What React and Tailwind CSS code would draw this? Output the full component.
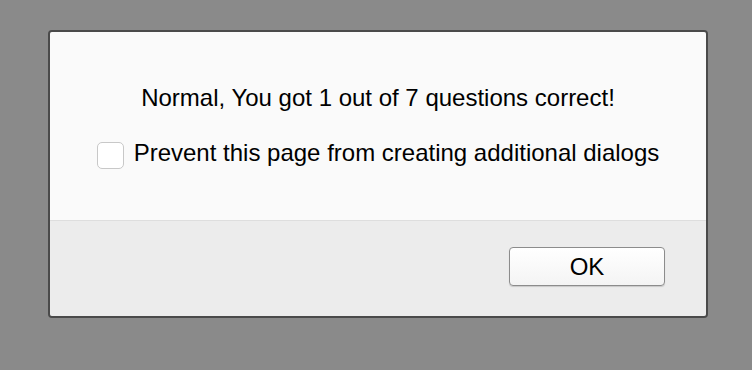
export default function App() {
  return (
    <div className="w-[752px] h-[370px] bg-[#8a8a8a] relative overflow-hidden" style={{ fontFamily: '"Liberation Sans", Arial, sans-serif' }}>
      <div className="absolute left-[48px] top-[30px] w-[660px] h-[288px] border-2 border-[#4a4a4a] rounded-[4px] overflow-hidden flex flex-col">
        <div className="h-[189px] bg-[#fafafa] border-b border-[#dedede] flex flex-col items-center">
          <div className="mt-[52px] text-[24px] leading-[28px] text-black">Normal, You got 1 out of 7 questions correct!</div>
          <div className="mt-[27px] flex items-start gap-[10px]">
            <div className="mt-[3px] w-[27px] h-[27px] rounded-[5px] border border-[#c8c8c8] bg-white" />
            <span className="text-[24px] leading-[28px] text-black">Prevent this page from creating additional dialogs</span>
          </div>
        </div>
        <div className="flex-1 bg-[#ececec] flex justify-end items-start pr-[41px] pt-[26px]">
          <button className="w-[156px] h-[39px] rounded-[4px] border border-[#8c8c8c] bg-gradient-to-b from-white to-[#f4f4f4] text-[24px] leading-[28px] text-black shadow-[0_1px_1px_rgba(0,0,0,0.15)]">OK</button>
        </div>
      </div>
    </div>
  );
}
